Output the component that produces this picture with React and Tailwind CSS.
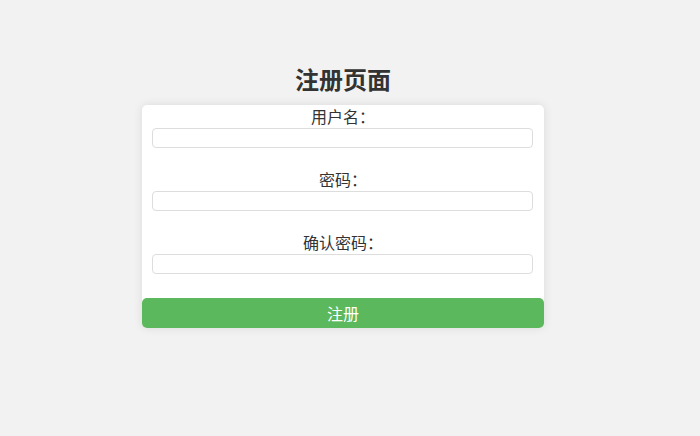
export default function App() {
  const font = { fontFamily: '"Noto Sans CJK SC", "Noto Sans", sans-serif' };
  const Field = ({ label, type, first }) => (
    <div className={first ? "" : "mt-[20px]"}>
      <label className="block text-center text-[16px] leading-[23px] text-[#333]">{label}</label>
      <input
        type={type}
        className="mx-[10px] block h-[20px] w-[381px] rounded-[4px] border border-[#ddd] bg-white outline-none"
      />
    </div>
  );
  return (
    <div className="min-h-[436px] w-full bg-[#f2f2f2]" style={font}>
      <div className="w-[686px]">
        <div className="mx-auto w-[402px] pt-[62px]">
          <h2 className="text-center text-[24px] font-bold leading-[33px] text-[#333]">注册页面</h2>
          <div className="mt-[10px] rounded-[5px] bg-white shadow-[0_0_10px_rgba(0,0,0,0.1)]">
            <Field label="用户名：" type="text" first />
            <Field label="密码：" type="password" />
            <Field label="确认密码：" type="password" />
            <button className="mt-[24px] block h-[30px] w-full rounded-[5px] bg-[#5cb85c] text-center text-[16px] text-white">
              注册
            </button>
          </div>
        </div>
      </div>
    </div>
  );
}
